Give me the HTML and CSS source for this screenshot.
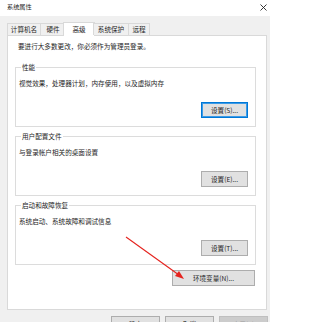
FILE: index.html
```html
<!DOCTYPE html>
<html lang="zh-CN">
<head>
<meta charset="utf-8">
<title>系统属性</title>
<link rel="stylesheet" href="styles.css">
</head>
<body>
<div class="window">
  <div class="titlebar">
    <span class="title">系统属性</span>
    <svg class="close" width="7" height="7" viewBox="0 0 7 7"><path d="M0.5 0.5 L6.5 6.5 M6.5 0.5 L0.5 6.5" stroke="#222" stroke-width="0.9" fill="none"/></svg>
  </div>
  <div class="dialog">
    <div class="tabs">
      <div class="tab t1">计算机名</div>
      <div class="tab t2">硬件</div>
      <div class="tab active">高级</div>
      <div class="tab t4">系统保护</div>
      <div class="tab t5">远程</div>
    </div>
    <div class="panel">
      <p class="note">要进行大多数更改，你必须作为管理员登录。</p>
      <fieldset class="group">
        <legend>性能</legend>
        <p class="desc">视觉效果，处理器计划，内存使用，以及虚拟内存</p>
        <div class="btn-row"><button class="btn default">设置(S)...</button></div>
      </fieldset>
      <fieldset class="group">
        <legend>用户配置文件</legend>
        <p class="desc">与登录帐户相关的桌面设置</p>
        <div class="btn-row"><button class="btn">设置(E)...</button></div>
      </fieldset>
      <fieldset class="group">
        <legend>启动和故障恢复</legend>
        <p class="desc">系统启动、系统故障和调试信息</p>
        <div class="btn-row"><button class="btn">设置(T)...</button></div>
      </fieldset>
      <div class="env-row"><button class="btn env">环境变量(N)...</button></div>
    </div>
    <div class="footer">
      <button class="btn foot">确定</button>
      <button class="btn foot">取消</button>
      <button class="btn foot disabled">应用(A)</button>
    </div>
  </div>
</div>
<svg class="arrow" width="313" height="322" viewBox="0 0 313 322">
  <line x1="126" y1="237" x2="179" y2="275" stroke="#e5231e" stroke-width="1.1"/>
  <polygon points="184,279 175,276 179,271" fill="#e5231e"/>
</svg>
</body>
</html>
```
FILE: styles.css
```css
* { box-sizing: border-box; }
html, body {
  margin: 0;
  padding: 0;
  background: #ffffff;
}
body {
  width: 313px;
  height: 322px;
  overflow: hidden;
  position: relative;
  font-family: "Noto Sans CJK SC", "Noto Sans", sans-serif;
  font-size: 6.6px;
  color: #1e1e1e;
}
.window {
  width: 270px;
}
.titlebar {
  height: 16px;
  background: #ffffff;
  display: flex;
  align-items: center;
  justify-content: space-between;
  padding: 0 3px 2px 7px;
}
.title {
  font-size: 6.2px;
  line-height: 8px;
  color: #222;
}
.close {
  display: block;
}
.dialog {
  background: #f0f0f0;
  height: 306px;
  padding-top: 6px;
}
.tabs {
  display: flex;
  align-items: flex-end;
  height: 13px;
  padding-left: 7px;
  position: relative;
  z-index: 1;
}
.tab {
  height: 12px;
  line-height: 11px;
  padding: 0;
  white-space: nowrap;
  border: 1px solid #d9d9d9;
  border-bottom: none;
  margin-right: -1px;
  background: #f0f0f0;
  text-align: center;
}
.t1 { width: 34px; }
.t2 { width: 26px; }
.t4 { width: 36px; }
.t5 { width: 22px; }
.tab.active {
  width: 32px;
  height: 14px;
  line-height: 12px;
  margin: 0 -2px -1px -2px;
  background: #ffffff;
}
.panel {
  margin-left: 7px;
  width: 260px;
  height: 275px;
  background: #ffffff;
  border: 1px solid #d9d9d9;
  padding: 6px 10px 0 7px;
}
.note {
  margin: 0 0 13px 3px;
  line-height: 8px;
}
.group {
  margin: 0 0 5px 0;
  padding: 8px 7px 0 2px;
  border: 1px solid #dcdcdc;
  min-width: 0;
  height: 64px;
}
.group legend {
  padding: 0 1px;
  margin-left: 3px;
  line-height: 8px;
}
.desc {
  margin: 0 0 0 1px;
  line-height: 8px;
}
.btn-row {
  display: flex;
  justify-content: flex-end;
  margin-top: 15px;
}
.btn {
  font-family: inherit;
  font-size: 6.6px;
  color: #1e1e1e;
  height: 16px;
  line-height: 13px;
  padding: 0;
  margin: 0;
  background: #e1e1e1;
  border: 1px solid #adadad;
  border-radius: 0;
  text-align: center;
  white-space: nowrap;
}
.btn-row .btn {
  width: 47px;
}
.btn.default {
  border: 1px solid #0078d7;
  box-shadow: inset 0 0 0 1px #3d9be6;
}
.env-row {
  display: flex;
  justify-content: flex-end;
  margin-top: 3px;
  padding-right: 1px;
}
.btn.env {
  width: 83px;
}
.footer {
  display: flex;
  justify-content: flex-end;
  gap: 5px;
  padding: 6px 2px 0 0;
}
.btn.foot {
  width: 49px;
}
.btn.disabled {
  color: #a0a0a0;
  background: #cccccc;
  border-color: #bfbfbf;
}
.arrow {
  position: absolute;
  left: 0;
  top: 0;
  pointer-events: none;
}
```
